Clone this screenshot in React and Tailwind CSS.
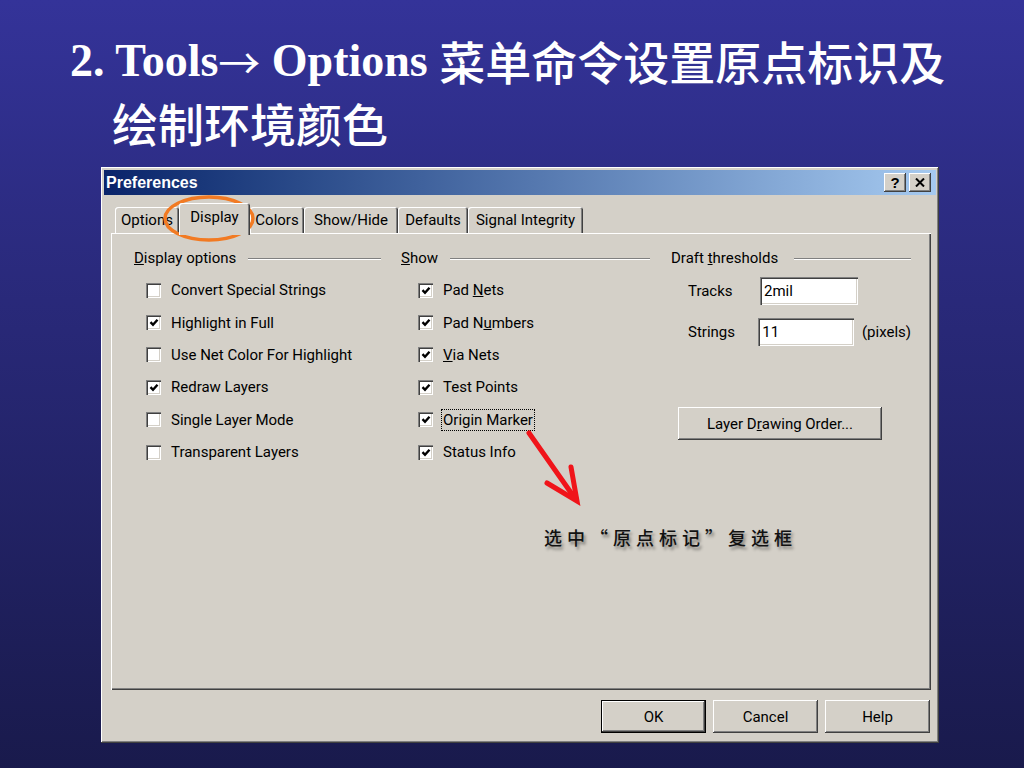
import React from "react";

function Box({ checked }) {
  return (
    <span className="w-[15px] h-[15px] bg-white shrink-0 flex items-center justify-center shadow-[inset_1px_1px_#808080,inset_2px_2px_#404040,inset_-1px_-1px_#ffffff,inset_-2px_-2px_#d4d0c8]">
      {checked && (
        <svg width="10" height="9" viewBox="0 0 10 9">
          <path d="M1.5 4.2 L4 6.8 L8.5 1.8" stroke="#000" strokeWidth="2.4" fill="none" />
        </svg>
      )}
    </span>
  );
}

function Row({ checked, children, indent, focus }) {
  return (
    <div className={"flex items-center h-[32.4px] " + indent}>
      <Box checked={checked} />
      {focus ? (
        <span className="ml-[8px] px-[1px] leading-[20px] border border-dotted border-black whitespace-nowrap">{children}</span>
      ) : (
        <span className="ml-[10px] whitespace-nowrap">{children}</span>
      )}
    </div>
  );
}

function Header({ children, gap }) {
  return (
    <div className="flex items-center h-[18px]">
      <span className="whitespace-nowrap">{children}</span>
      <div className={"flex-1 h-[2px] border-t border-t-[#808080] border-b border-b-white mt-[2px] " + gap} />
    </div>
  );
}

function Field({ value }) {
  return (
    <div className="w-[98px] h-[28px] bg-white flex items-center pl-[4px] shadow-[inset_1px_1px_#808080,inset_2px_2px_#404040,inset_-1px_-1px_#ffffff,inset_-2px_-2px_#d4d0c8]">
      {value}
    </div>
  );
}

const raised =
  "shadow-[inset_-1px_-1px_#404040,inset_1px_1px_#ffffff,inset_-2px_-2px_#808080,inset_2px_2px_#d4d0c8]";

function Tab({ w, children, selected }) {
  if (selected) {
    return (
      <div
        className={
          "relative z-10 h-[32px] mb-[-2px] bg-[#d4d0c8] rounded-t-[3px] flex justify-center pt-[4px] whitespace-nowrap shadow-[inset_1px_1px_#ffffff,inset_-1px_0_#404040,inset_-2px_0_#808080] " +
          w
        }
      >
        {children}
      </div>
    );
  }
  return (
    <div
      className={
        "h-[26px] bg-[#d4d0c8] rounded-t-[3px] flex justify-center pt-[3px] whitespace-nowrap shadow-[inset_1px_1px_#ffffff,inset_-1px_0_#404040,inset_-2px_0_#808080] " +
        w
      }
    >
      {children}
    </div>
  );
}

export default function App() {
  return (
    <div className="relative w-[1024px] h-[768px] overflow-hidden bg-gradient-to-b from-[#343399] to-[#191a4c]">
      {/* Slide title */}
      <div className="h-[157px] pt-[30px] text-white text-[46px] font-['Liberation_Serif','Noto_Sans_CJK_SC',serif]">
        <div className="h-[61px] leading-[63px] pl-[70px] whitespace-nowrap overflow-visible flex items-center">
          <span className="font-bold">2. Tools</span>
          <span className="font-['Noto_Sans_CJK_SC',sans-serif] font-normal text-[42px]">→</span>
          <span className="font-bold whitespace-pre"> Options </span>
          <span className="font-['Noto_Sans_CJK_SC',sans-serif] font-medium">菜单命令设置原点标识及</span>
        </div>
        <div className="h-[63px] leading-[63px] pl-[112px] whitespace-nowrap flex items-center font-['Noto_Sans_CJK_SC',sans-serif] font-medium">绘制环境颜色</div>
      </div>

      {/* Dialog */}
      <div
        className={
          "mt-[10px] ml-[101px] w-[838px] h-[576px] bg-[#d4d0c8] p-[3px] flex flex-col text-[15px] leading-[20px] text-black font-['Roboto',sans-serif] shadow-[inset_-1px_-1px_#404040,inset_1px_1px_#ffffff,inset_-2px_-2px_#808080,inset_2px_2px_#d4d0c8]"
        }
      >
        {/* Title bar */}
        <div className="h-[25px] bg-gradient-to-r from-[#0a246a] to-[#a6caf0] flex items-center pl-[2px] pr-[5px]">
          <span className="text-white font-bold text-[16px] font-['Liberation_Sans',sans-serif]">Preferences</span>
          <div className="ml-auto flex gap-[3px]">
            <div className={"w-[22px] h-[19px] bg-[#d4d0c8] flex items-center justify-center font-bold text-[15px] font-['Liberation_Sans',sans-serif] " + raised}>?</div>
            <div className={"w-[22px] h-[19px] bg-[#d4d0c8] flex items-center justify-center " + raised}>
              <svg width="10" height="9" viewBox="0 0 10 9">
                <path d="M1 0.5 L9 8.5 M9 0.5 L1 8.5" stroke="#000" strokeWidth="2" />
              </svg>
            </div>
          </div>
        </div>

        {/* Tabs */}
        <div className="mt-[8px] ml-[7px] flex items-end h-[30px] pl-[4px]">
          <Tab w="w-[64px]">Options</Tab>
          <Tab w="w-[71px]" selected>Display</Tab>
          <Tab w="w-[54px]">Colors</Tab>
          <Tab w="w-[94px]">Show/Hide</Tab>
          <Tab w="w-[70px]">Defaults</Tab>
          <Tab w="w-[115px]">Signal Integrity</Tab>
        </div>

        {/* Panel */}
        <div className="ml-[7px] w-[820px] h-[457px] pt-[16px] pl-[23px] flex shadow-[inset_1px_1px_#ffffff,inset_-1px_-1px_#404040,inset_-2px_-2px_#808080]">
          <div className="w-[247px]">
            <Header gap="ml-[12px]">
              <u>D</u>isplay options
            </Header>
            <div className="mt-[7px]">
              <Row indent="pl-[12px]">Convert Special Strings</Row>
              <Row indent="pl-[12px]" checked>Highlight in Full</Row>
              <Row indent="pl-[12px]">Use Net Color For Highlight</Row>
              <Row indent="pl-[12px]" checked>Redraw Layers</Row>
              <Row indent="pl-[12px]">Single Layer Mode</Row>
              <Row indent="pl-[12px]">Transparent Layers</Row>
            </div>
          </div>
          <div className="w-[249px] ml-[20px]">
            <Header gap="ml-[12px]">
              <u>S</u>how
            </Header>
            <div className="mt-[7px]">
              <Row indent="pl-[17px]" checked>
                Pad <u>N</u>ets
              </Row>
              <Row indent="pl-[17px]" checked>
                Pad N<u>u</u>mbers
              </Row>
              <Row indent="pl-[17px]" checked>
                <u>V</u>ia Nets
              </Row>
              <Row indent="pl-[17px]" checked>Test Points</Row>
              <Row indent="pl-[17px]" checked focus>
                Origin Marker
              </Row>
              <Row indent="pl-[17px]" checked>Status Info</Row>
            </div>
          </div>
          <div className="w-[240px] ml-[21px]">
            <Header gap="ml-[16px]">
              Draft <u>t</u>hresholds
            </Header>
            <div className="mt-[10px] flex items-center h-[28px]">
              <span className="w-[89px] pl-[17px]">Tracks</span>
              <Field value="2mil" />
            </div>
            <div className="mt-[13px] flex items-center h-[28px]">
              <span className="w-[89px] pl-[17px]">Strings</span>
              <Field value="11" />
              <span className="ml-[8px]">(pixels)</span>
            </div>
            <div className={"mt-[61px] ml-[7px] w-[204px] h-[33px] bg-[#d4d0c8] flex items-center justify-center " + raised}>
              Layer D<u>r</u>awing Order...
            </div>
          </div>
        </div>

        {/* Bottom buttons */}
        <div className="mt-[10px] flex justify-end gap-[7px] pr-[6px]">
          <div className="w-[105px] h-[33px] border border-black">
            <div className={"w-full h-full flex items-center justify-center " + raised}>OK</div>
          </div>
          <div className={"w-[105px] h-[33px] flex items-center justify-center " + raised}>Cancel</div>
          <div className={"w-[105px] h-[33px] flex items-center justify-center " + raised}>Help</div>
        </div>
      </div>

      {/* Annotations */}
      <svg className="absolute left-0 top-0 pointer-events-none" width="1024" height="768">
        <ellipse cx="209" cy="218.5" rx="44" ry="21.5" fill="none" stroke="#f27a22" strokeWidth="3.5" />
        <g stroke="#f0141a" strokeWidth="5" strokeLinecap="round" fill="none">
          <path d="M529 433 L574 497" />
          <path d="M547 483 L577 501 L571 467" strokeLinejoin="miter" />
        </g>
      </svg>
      <div className="absolute left-[544px] top-[525px] text-[18px] leading-[24px] tracking-[5px] text-[#111] font-medium whitespace-nowrap font-['Noto_Sans_CJK_SC',sans-serif] [text-shadow:2px_3px_3px_rgba(0,0,0,0.4)]">
        选中“原点标记”复选框
      </div>
    </div>
  );
}
